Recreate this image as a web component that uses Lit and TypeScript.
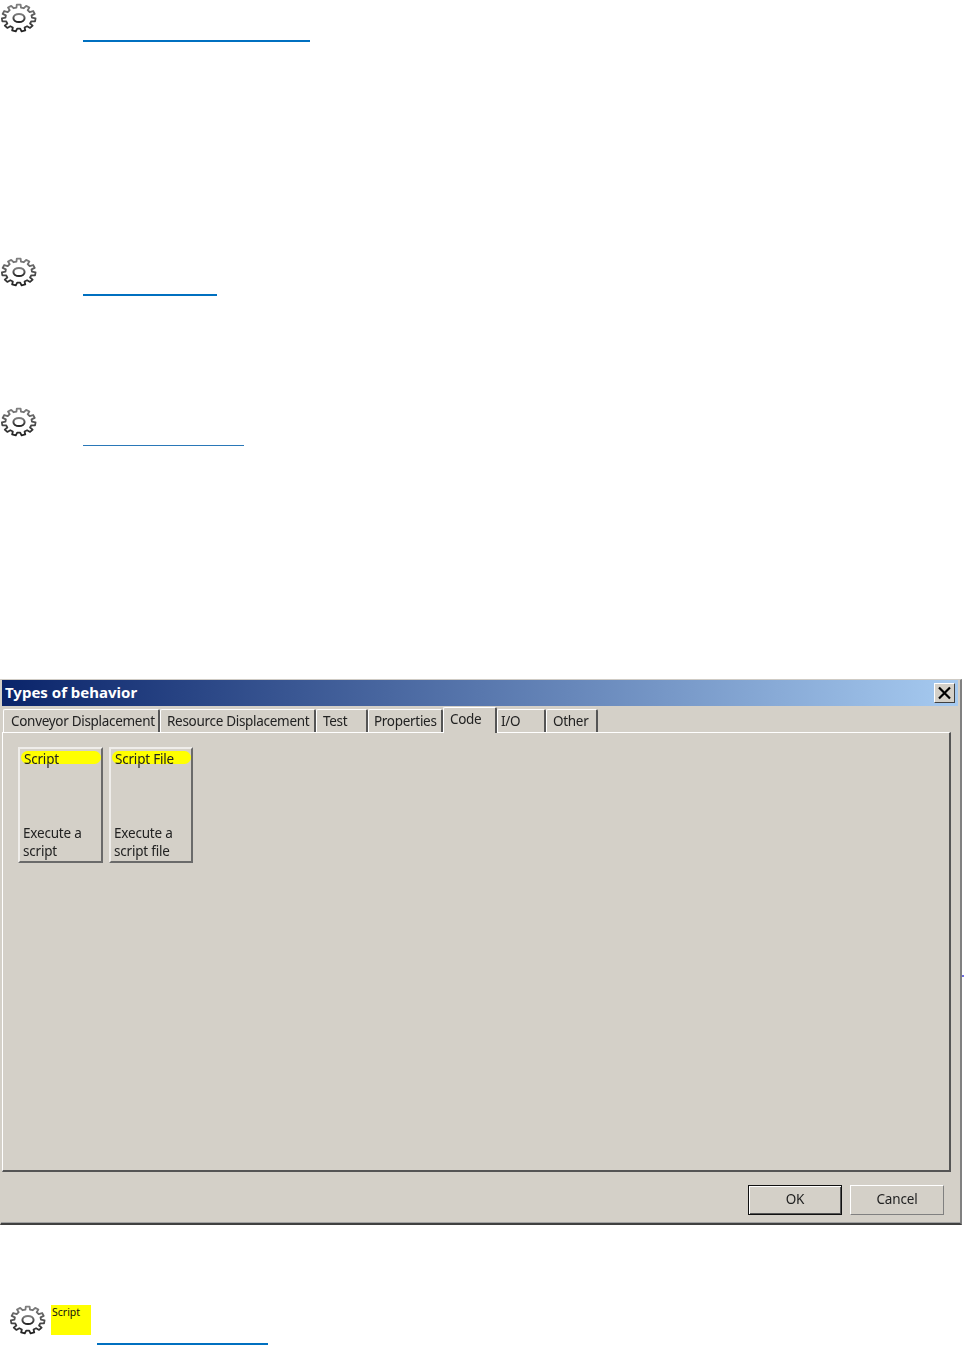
import { LitElement, html, css, svg } from "lit";
import { customElement } from "lit/decorators.js";

function gearPath(teeth: number, rOut: number, rIn: number, cx: number, cy: number): string {
  const pts: string[] = [];
  const step = (Math.PI * 2) / teeth;
  for (let i = 0; i < teeth; i++) {
    const a = i * step - Math.PI / 2;
    const seq: [number, number][] = [
      [rIn, a - step * 0.3],
      [rOut, a - step * 0.2],
      [rOut, a + step * 0.2],
      [rIn, a + step * 0.3],
    ];
    for (const [r, t] of seq) {
      pts.push(`${(cx + r * Math.cos(t) * 1.25).toFixed(2)} ${(cy + r * Math.sin(t)).toFixed(2)}`);
    }
  }
  return "M" + pts.join("L") + "Z";
}

const gear = () => html`<svg class="gear" viewBox="0 0 37 30" aria-hidden="true">
  ${svg`<defs><linearGradient id="gs" x1="0" y1="0" x2="0" y2="1">
    <stop offset="0" stop-color="#808080"/><stop offset="1" stop-color="#222"/></linearGradient></defs>
    <path d=${gearPath(11, 13.5, 10.6, 18.7, 15)} fill="#fff" stroke="url(#gs)" stroke-width="1.8" stroke-linejoin="round"/>
    <ellipse cx="19" cy="15" rx="5.6" ry="4.1" fill="#fff" stroke="url(#gs)" stroke-width="2"/>`}
</svg>`;

const TABS = [
  { label: "Conveyor Displacement", w: 157, pad: 7 },
  { label: "Resource Displacement", w: 156, pad: 6 },
  { label: "Test", w: 52, pad: 6 },
  { label: "Properties", w: 75, pad: 5 },
  { label: "Code", w: 54, pad: 6, active: true },
  { label: "I/O", w: 49, pad: 3 },
  { label: "Other", w: 52, pad: 6 },
];

@customElement("app-root")
export class AppRoot extends LitElement {
  static styles = css`
    :host { display: block; width: 964px; height: 1346px; overflow: hidden; background: #fff; font-family: "Noto Sans", "Liberation Sans", sans-serif; color: #111; }
    .gear { display: block; width: 37px; height: 30px; filter: blur(0.5px); }
    .rule { height: 2px; background: #0070c0; margin-left: 83px; }
    .e1 { padding-top: 3px; }
    .e1 .rule { width: 227px; margin-top: 7px; }
    .e2 { margin-top: 215px; }
    .e2 .rule { width: 134px; margin-top: 7px; }
    .e3 { margin-top: 111px; }
    .e3 .rule { width: 161px; margin-top: 8px; height: 1px; background: #2a78b8; }
    .dialog { position: relative; margin-top: 233px; width: 962px; height: 546px; box-sizing: border-box; background: #d4d0c8; border-top: 1px solid #cfcbc4; border-left: 1px solid #d4d0c8; border-right: 2px solid #808080; border-bottom: 2px solid #404040; box-shadow: inset 0 -1px 0 #a0a0a0; display: flex; flex-direction: column; filter: blur(0.25px); }
    .mark { position: absolute; right: -5px; top: 295px; width: 3px; height: 2px; background: #6f6fe0; }
    .title { height: 26px; margin: 0 2px 0 1px; background: linear-gradient(90deg, #0a246a, #a6caf0); display: flex; align-items: center; justify-content: space-between; padding: 0 3px 2px 3px; box-sizing: border-box; flex: none; }
    .title span { color: #fff; font: bold 15px "Noto Sans", sans-serif; white-space: nowrap; }
    .close { width: 21px; height: 20px; box-sizing: border-box; background: #d4d0c8; border: 1px solid; border-color: #fff #404040 #404040 #fff; display: flex; align-items: center; justify-content: center; margin-top: 2px; }
    .close svg { width: 15px; height: 14px; display: block; }
    .tabs { display: flex; align-items: flex-end; height: 26px; padding-left: 2px; flex: none; position: relative; z-index: 1; }
    .tab { box-sizing: border-box; height: 23px; background: #d4d0c8; border-top: 1px solid #fff; border-left: 1px solid #fff; border-right: 2px solid #555; padding-top: 1px; font-size: 13.5px; line-height: 20px; letter-spacing: -0.3px; white-space: nowrap; border-radius: 2px 2px 0 0; flex: none; color: #222; overflow: hidden; }
    .tab.active { height: 26px; margin-bottom: -1px; padding-top: 0; line-height: 22px; }
    .pane { margin-left: 1px; width: 949px; height: 440px; box-sizing: border-box; border-top: 1px solid #fff; border-left: 1px solid #fff; border-right: 2px solid #555; border-bottom: 2px solid #555; padding: 14px 15px; display: flex; gap: 6px; align-items: flex-start; flex: none; }
    .card { box-sizing: border-box; width: 85px; height: 116px; border: 2px solid; border-color: #efedea #6a6a6a #6a6a6a #efedea; padding: 2px 0 0 1px; display: flex; flex-direction: column; justify-content: space-between; font-size: 13.5px; line-height: 18px; letter-spacing: -0.2px; color: #222; }
    .card + .card { width: 84px; }
    .card-name { background: #ffff00; border-radius: 6.5px; height: 13px; line-height: 17px; padding-left: 3px; white-space: nowrap; }
    .card-desc { padding: 0 0 1px 2px; }
    .footer { display: flex; justify-content: flex-end; gap: 8px; padding: 13px 16px 0 0; }
    .btn { box-sizing: border-box; width: 94px; height: 30px; padding-bottom: 2px; background: #d4d0c8; border: 1px solid; border-color: #fff #808080 #808080 #fff; font-size: 13.5px; letter-spacing: -0.15px; display: flex; align-items: center; justify-content: center; color: #222; }
    .btn.default { outline: 1px solid #111; outline-offset: -1px; border: 0; box-shadow: inset 1px 1px 0 1px #fff, inset -2px -2px 0 0 #555; }
    .e4 { margin-top: 80px; padding-left: 9px; }
    .e4-row { display: flex; align-items: flex-start; }
    .note { width: 40px; height: 30px; margin-left: 5px; background: #ffff00; font-size: 10.5px; line-height: 15px; padding-left: 1px; box-sizing: border-box; color: #111; }
    .e4 .rule { width: 171px; margin: 8px 0 0 88px; }
  `;

  render() {
    return html`
      <div class="e1">${gear()}<div class="rule"></div></div>
      <div class="e2">${gear()}<div class="rule"></div></div>
      <div class="e3">${gear()}<div class="rule"></div></div>
      <div class="dialog">
        <div class="mark"></div>
        <div class="title">
          <span>Types of behavior</span>
          <div class="close"><svg viewBox="0 0 15 14"><path d="M2 1.5 13 12.5M13 1.5 2 12.5" stroke="#000" stroke-width="2.2" fill="none"/></svg></div>
        </div>
        <div class="tabs">
          ${TABS.map((t) => html`<div class="tab ${t.active ? "active" : ""}" style="width:${t.w}px;padding-left:${t.pad}px">${t.label}</div>`)}
        </div>
        <div class="pane">
          <div class="card"><div class="card-name">Script</div><div class="card-desc">Execute a<br />script</div></div>
          <div class="card"><div class="card-name">Script File</div><div class="card-desc">Execute a<br />script file</div></div>
        </div>
        <div class="footer">
          <div class="btn default">OK</div>
          <div class="btn">Cancel</div>
        </div>
      </div>
      <div class="e4">
        <div class="e4-row">${gear()}<div class="note">Script</div></div>
        <div class="rule"></div>
      </div>
    `;
  }
}
